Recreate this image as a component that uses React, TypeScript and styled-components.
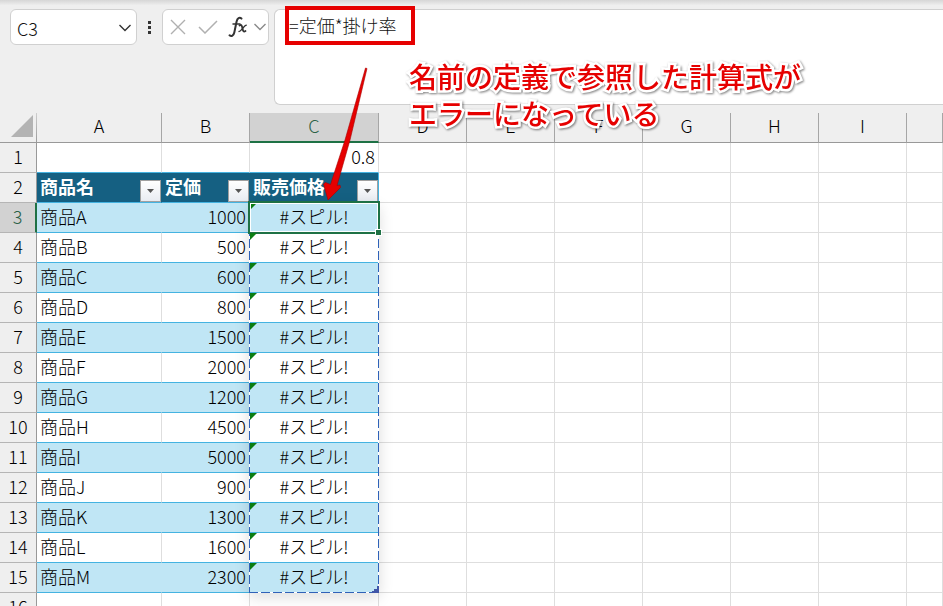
import React from "react";
import styled, { createGlobalStyle, css } from "styled-components";

const Global = createGlobalStyle`
  *, *::before, *::after { box-sizing: border-box; }
  body {
    margin: 0;
    overflow: hidden;
    background: #efefef;
    color: #000;
    font-family: "Noto Sans CJK JP", sans-serif;
    font-weight: 300;
  }
`;

const Page = styled.div`
  position: relative;
  display: flex;
  flex-direction: column;
  height: 100vh;
  overflow: hidden;
`;

const RibbonEdge = styled.div`
  flex: none;
  height: 9px;
  background: linear-gradient(#d6d6d6, #efefef 60%);
`;

const FormulaBar = styled.header`
  display: flex;
  align-items: flex-start;
  flex: none;
  padding-left: 10px;
  height: 104px;
`;

const Box = styled.div`
  display: flex;
  align-items: center;
  height: 36px;
  background: #fff;
  border: 1px solid #d0d0d0;
  border-radius: 6px;
`;

const NameBox = styled(Box)`
  width: 127px;
  padding: 2px 4px 0 6px;
`;

const NameInput = styled.input`
  flex: 1;
  min-width: 0;
  padding: 0;
  border: 0;
  outline: 0;
  background: none;
  color: #111;
  font: 300 18px/24px "Noto Sans CJK JP", sans-serif;
`;

const IconButton = styled.button`
  display: flex;
  align-items: center;
  justify-content: center;
  padding: 0;
  border: 0;
  background: none;
  color: #333;
`;

const Grip = styled.div`
  display: flex;
  flex-direction: column;
  gap: 2px;
  margin: 12px 11px 0;
  i { width: 3px; height: 3px; background: #333; }
`;

const Actions = styled(Box)`
  display: grid;
  grid-template-columns: 28px 30px 25px 14px;
  justify-items: start;
  width: 107px;
  padding-left: 7px;
`;

const FormulaField = styled.div`
  flex: 1;
  align-self: flex-start;
  height: 96px;
  margin-left: 5px;
  background: #fff;
  border: 1px solid #d0d0d0;
  border-right: 0;
  border-radius: 6px 0 0 6px;
`;

const FormulaInput = styled.textarea`
  display: block;
  width: 100%;
  height: 90px;
  padding: 2px 14px;
  border: 0;
  outline: 0;
  resize: none;
  background: none;
  color: #111;
  font: 300 18px/26px "Noto Sans CJK JP", sans-serif;
`;

const Sheet = styled.table`
  flex: none;
  table-layout: fixed;
  width: 100%;
  border-collapse: separate;
  border-spacing: 0;
  font-size: 18px;
  line-height: 24px;
`;

const Col = styled.col<{ $w?: number }>`
  ${(p) => p.$w && css`width: ${p.$w}px;`}
`;

const Corner = styled.th`
  height: 30px;
  padding: 0 3px 3px 0;
  border-right: 1px solid #999;
  border-bottom: 1px solid #999;
  border-image: linear-gradient(#d0d0d0, #999) 1;
  border-left: 0;
  border-top: 0;
  svg { display: block; margin-left: auto; }
`;

const ColHead = styled.th<{ $active?: boolean }>`
  height: 30px;
  padding: 0 0 ${(p) => (p.$active ? 3 : 4)}px;
  vertical-align: top;
  line-height: 25px;
  font-weight: 300;
  color: ${(p) => (p.$active ? "#2b6146" : "#000")};
  background: ${(p) => (p.$active ? "#d2d2d2" : "#efefef")};
  border-right: 1px solid #a6a6a6;
  border-bottom: ${(p) => (p.$active ? "2px solid #1e7145" : "1px solid #999")};
`;

const RowHead = styled.th<{ $active?: boolean }>`
  height: 30px;
  padding: 0 0 4px;
  font-weight: 300;
  color: ${(p) => (p.$active ? "#2b6146" : "#000")};
  background: ${(p) => (p.$active ? "#d2d2d2" : "#efefef")};
  border-right: ${(p) => (p.$active ? "2px solid #1e7145" : "1px solid #999")};
  border-bottom: 1px solid #b5b5b5;
`;

type Tone = "plain" | "head" | "band" | "light";

const Cell = styled.td<{ $tone?: Tone; $align?: string; $underBlue?: boolean }>`
  position: relative;
  height: 30px;
  padding: 0 3px 4px;
  white-space: nowrap;
  text-align: ${(p) => p.$align ?? "left"};
  background: #fff;
  border-right: 1px solid #dedede;
  border-bottom: 1px solid ${(p) => (p.$underBlue ? "#44b3e1" : "#dedede")};
  ${(p) => p.$tone === "head" && css`
    padding-bottom: 0;
    background: #156082;
    color: #fff;
    font-weight: 700;
    border-color: #156082;
    border-bottom-color: #44b3e1;
    &:nth-child(4) { border-right-color: #44b3e1; }
  `}
  ${(p) => p.$tone === "band" && css`
    background: #c0e6f5;
    border-right-color: #c0e6f5;
    border-bottom-color: #44b3e1;
  `}
  ${(p) => p.$tone === "light" && css`border-bottom-color: #44b3e1;`}
`;

const HeadContent = styled.div`
  display: flex;
  justify-content: space-between;
  height: 29px;
  margin-right: -3px;
  line-height: 27px;
`;

const FilterButton = styled(IconButton)`
  align-self: flex-end;
  width: 21px;
  height: 22px;
  border: 1px solid #a0a0a0;
  background: linear-gradient(#fff, #e9ecf2);
`;

const ErrorMark = styled.i`
  position: absolute;
  left: 0;
  top: 0;
  z-index: 2;
  border-top: 7px solid #0b7d12;
  border-right: 7px solid transparent;
`;

const Selection = styled.div`
  position: absolute;
  z-index: 2;
  left: -2px;
  top: -2px;
  right: -2px;
  bottom: -2px;
  border: 2px solid #1e7145;
  box-shadow: inset 0 0 0 1px #fff;
  &::after {
    content: "";
    position: absolute;
    right: -3px;
    bottom: -3px;
    width: 5px;
    height: 5px;
    background: #1e7145;
    box-shadow: 0 0 0 1px #fff;
  }
`;

const dashV = "repeating-linear-gradient(#2f62b8 0 9px, #fff 9px 12px)";
const dashH = "repeating-linear-gradient(90deg, #2f62b8 0 9px, #fff 9px 12px)";

const SpillRange = styled.div`
  position: absolute;
  z-index: 1;
  left: -1px;
  right: -1px;
  top: 0;
  height: 390px;
  background:
    ${dashV} left / 1px 100% no-repeat,
    ${dashV} right / 1px 100% no-repeat,
    ${dashH} bottom / 100% 1px no-repeat;
  box-shadow: 0 4px 14px rgba(0, 0, 0, 0.14);
  pointer-events: none;
  svg { position: absolute; right: 0; bottom: 0; }
`;

const FormulaFrame = styled.div`
  position: absolute;
  z-index: 3;
  left: 285px;
  top: 6px;
  width: 130px;
  height: 39px;
  border: 4px solid #e60000;
  pointer-events: none;
`;

const Note = styled.p`
  position: absolute;
  z-index: 3;
  left: 409px;
  top: 58px;
  margin: 0;
  color: #e60000;
  font-size: 28px;
  line-height: 37px;
  font-weight: 500;
  white-space: nowrap;
  -webkit-text-stroke: 5px #fff;
  paint-order: stroke fill;
  filter: drop-shadow(1px 1px 1px rgba(0, 0, 0, 0.5));
`;

const Arrow = styled.svg`
  position: absolute;
  z-index: 3;
  left: 310px;
  top: 60px;
  pointer-events: none;
`;

const Chevron = ({ color }: { color: string }) => (
  <svg width="14" height="8" viewBox="0 0 14 8" fill="none" stroke={color} strokeWidth="1.4">
    <path d="M1.500 1L7 6.500 12.500 1" />
  </svg>
);

const columns = ["A", "B", "C", "D", "E", "F", "G", "H", "I"];
const restColumns = [3, 4, 5, 6, 7, 8, 9];
const products: [string, number][] = [
  ["商品A", 1000], ["商品B", 500], ["商品C", 600], ["商品D", 800], ["商品E", 1500],
  ["商品F", 2000], ["商品G", 1200], ["商品H", 4500], ["商品I", 5000], ["商品J", 900],
  ["商品K", 1300], ["商品L", 1600], ["商品M", 2300],
];

const Rest = () => <>{restColumns.map((c) => <Cell key={c} />)}</>;

const HeaderCell = ({ label }: { label: string }) => (
  <Cell $tone="head">
    <HeadContent>
      {label}
      <FilterButton aria-label={`${label} フィルター`}>
        <svg width="7" height="4"><path d="M0 0h7L3.5 4z" fill="#555" /></svg>
      </FilterButton>
    </HeadContent>
  </Cell>
);

export default function App() {
  return (
    <Page>
      <Global />
      <RibbonEdge />
      <FormulaBar>
        <NameBox>
          <NameInput aria-label="名前ボックス" defaultValue="C3" />
          <IconButton aria-label="名前の一覧"><Chevron color="#333" /></IconButton>
        </NameBox>
        <Grip><i /><i /><i /></Grip>
        <Actions>
          <IconButton aria-label="キャンセル">
            <svg width="16" height="16" fill="none" stroke="#b0b0b0" strokeWidth="1.4"><path d="M1 1l14 14M15 1L1 15" /></svg>
          </IconButton>
          <IconButton aria-label="入力">
            <svg width="20" height="14" fill="none" stroke="#b0b0b0" strokeWidth="1.5"><path d="M1 7l6 6L19 1" /></svg>
          </IconButton>
          <IconButton aria-label="関数の挿入">
            <svg width="20" height="22" viewBox="0 0 20 22" fill="none" stroke="#333" strokeLinecap="round">
              <path d="M13.5 2.6C11.5.8 9.300 2 8.600 5.500L6.300 16.500C5.600 19.600 3.500 21 1.500 19.300" strokeWidth="2" />
              <path d="M5 8h7" strokeWidth="1.500" />
              <path d="M11.500 9.500c2-1.500 2.500.5 3 3s1 4 3 2.500" strokeWidth="1.800" />
              <path d="M18.300 9.200c-2 0-5 6.300-7.300 6.300" strokeWidth="1.300" />
            </svg>
          </IconButton>
          <IconButton aria-label="関数の一覧"><Chevron color="#8a8a8a" /></IconButton>
        </Actions>
        <FormulaField>
          <FormulaInput aria-label="数式バー" spellCheck={false} defaultValue="=定価*掛け率" />
        </FormulaField>
      </FormulaBar>

      <Sheet>
        <colgroup>
          <Col $w={37} /><Col $w={125} /><Col $w={88} /><Col $w={129} />
          {restColumns.slice(0, 6).map((c) => <Col key={c} $w={88} />)}
          <Col />
        </colgroup>
        <thead>
          <tr>
            <Corner aria-label="すべて選択">
              <svg width="22" height="22"><path d="M22 0v22H0z" fill="#b3b3b3" /></svg>
            </Corner>
            {columns.map((c) => <ColHead key={c} scope="col" $active={c === "C"}>{c}</ColHead>)}
            <ColHead />
          </tr>
        </thead>
        <tbody>
          <tr>
            <RowHead scope="row">1</RowHead>
            <Cell $underBlue /><Cell $underBlue /><Cell $underBlue $align="right">0.8</Cell>
            <Rest />
          </tr>
          <tr>
            <RowHead scope="row">2</RowHead>
            <HeaderCell label="商品名" /><HeaderCell label="定価" /><HeaderCell label="販売価格" />
            <Rest />
          </tr>
          {products.map(([name, price], i) => {
            const tone: Tone = i % 2 ? "light" : "band";
            return (
              <tr key={name}>
                <RowHead scope="row" $active={i === 0}>{i + 3}</RowHead>
                <Cell $tone={tone}>{name}</Cell>
                <Cell $tone={tone} $align="right">{price}</Cell>
                <Cell $tone={tone} $align="center">
                  <ErrorMark />
                  #スピル!
                  {i === 0 && (
                    <>
                      <SpillRange>
                        <svg width="7" height="7"><path d="M5 0h2v7H0V5h2V3h3z" fill="#4056a8" /></svg>
                      </SpillRange>
                      <Selection />
                    </>
                  )}
                </Cell>
                <Rest />
              </tr>
            );
          })}
          <tr>
            <RowHead scope="row">16</RowHead>
            <Cell /><Cell /><Cell /><Rest />
          </tr>
        </tbody>
      </Sheet>

      <FormulaFrame />
      <Note>名前の定義で参照した計算式が<br />エラーになっている</Note>
      <Arrow width="70" height="145" viewBox="0 0 70 145">
        <path
          d="M55.500 8L57 8.500 40 80 27 125.500l3-.5.5 2.500L18 140 13.500 124l2-1.500 5 2L35 80z"
          fill="#e60000"
          stroke="#a80000"
          strokeWidth=".6"
          strokeLinejoin="round"
        />
      </Arrow>
    </Page>
  );
}
